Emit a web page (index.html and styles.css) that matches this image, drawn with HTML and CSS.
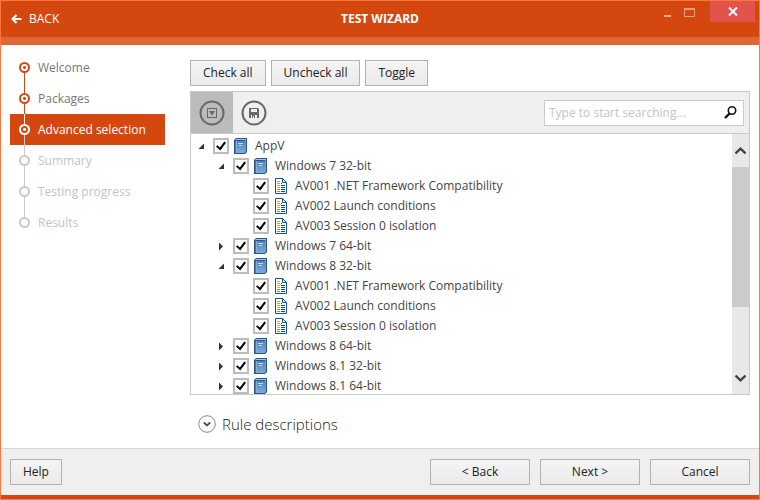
FILE: index.html
```html
<!DOCTYPE html>
<html lang="en">
<head>
<meta charset="utf-8">
<meta name="viewport" content="width=device-width, initial-scale=1">
<title>Test Wizard</title>
<link rel="stylesheet" href="styles.css">
</head>
<body>
<svg class="sprite" aria-hidden="true">
  <defs>
    <linearGradient id="cover" x1="0" y1="0" x2="0" y2="1">
      <stop offset="0" stop-color="#4f83ba"/>
      <stop offset="1" stop-color="#7dabd8"/>
    </linearGradient>
  </defs>
  <symbol id="book" viewBox="0 0 14 16">
    <path d="M3 0H14V14L12 16H1V2Z" fill="#27568c"/>
    <path d="M3 1H13V2H2Z" fill="#a9c6e2"/>
    <rect x="2" y="3" width="2" height="12" fill="#4679b0"/>
    <rect x="4" y="3" width="8" height="12" fill="url(#cover)"/>
    <path d="M3.500 3V15" stroke="#86b0d8"/>
    <path d="M12.500 2V14" stroke="#6d97c2"/>
    <path d="M5 5.500H10M6 7.500H9" stroke="#c4daee"/>
  </symbol>
  <symbol id="rule" viewBox="0 0 14 16">
    <path d="M2.500 0.500H9.500L13.500 4.500V15.500H2.500Z" fill="#fff" stroke="#0f578c"/>
    <path d="M9.500 0.500V4.500H13.500Z" fill="#d8e8f2" stroke="#0f578c"/>
    <path d="M4 3.500H7M4 5.500H7" stroke="#f59a1c"/>
    <path d="M4 7.500H7M4 9.500H7" stroke="#ecae12"/>
    <path d="M4 11.500H7M4 13.500H7" stroke="#5eae3c"/>
    <path d="M8 5.500H9M8 7.500H12M8 9.500H12M8 11.500H12M8 13.500H12" stroke="#174c78"/>
  </symbol>
  <symbol id="open" viewBox="0 0 7 7"><path d="M6 0.500V6H0.500Z" fill="#333"/></symbol>
  <symbol id="closed" viewBox="0 0 7 9"><path d="M1 0.500L5 4.500L1 8.500Z" fill="#333"/></symbol>
</svg>

<header class="titlebar">
  <button class="back" type="button">
    <svg width="11" height="10" viewBox="0 0 11 10" fill="none" stroke="#fff" stroke-width="2"><path d="M5.500 1L1.500 5L5.500 9M1.500 5H10.500"/></svg>
    BACK
  </button>
  <h1 class="title">TEST WIZARD</h1>
  <div class="caption">
    <button class="caption-button minimize" type="button" aria-label="Minimize"><svg width="7" height="2"><rect width="7" height="2" fill="#eeab90"/></svg></button>
    <button class="caption-button maximize" type="button" aria-label="Maximize"><svg width="11" height="9" fill="none" stroke="#eb9f7c"><path d="M0 1H11" stroke-width="2"/><path d="M0.500 1V8.500H10.500V1"/></svg></button>
    <button class="caption-button close" type="button" aria-label="Close"><svg width="10" height="9" viewBox="0 0 10 9" stroke="#fff" stroke-width="2"><path d="M1 0.500L9 8.500M9 0.500L1 8.500"/></svg></button>
  </div>
</header>

<div class="workspace">
  <nav aria-label="Steps">
    <ol class="steps">
      <li class="step done">Welcome</li>
      <li class="step done">Packages</li>
      <li class="step current" aria-current="step">Advanced selection</li>
      <li class="step">Summary</li>
      <li class="step">Testing progress</li>
      <li class="step">Results</li>
    </ol>
  </nav>

  <main class="content">
    <div class="actions">
      <button class="button" type="button">Check all</button>
      <button class="button" type="button">Uncheck all</button>
      <button class="button" type="button">Toggle</button>
    </div>

    <section class="panel">
      <div class="toolbar">
        <button class="tool active" type="button" aria-label="Filter">
          <svg width="26" height="26" viewBox="0 0 26 26" fill="none" stroke="#686868"><circle cx="13" cy="13" r="11.500" stroke-width="2"/><rect x="8.500" y="8.500" width="9" height="9"/><path d="M10 11H16L13 15.500Z" fill="#686868" stroke="none"/></svg>
        </button>
        <button class="tool" type="button" aria-label="Save">
          <svg width="26" height="26" viewBox="0 0 26 26"><circle cx="13" cy="13" r="11.500" fill="none" stroke="#686868" stroke-width="2"/><path d="M8 8H17L18 9V18H8Z" fill="#686868"/><path d="M10 9H16V12H10ZM10 15H16V18H10Z" fill="#efefef"/><path d="M11 15H14V18H13V16H12V18H11Z" fill="#686868"/></svg>
        </button>
        <div class="search">
          <input class="search-input" type="text" aria-label="Search" placeholder="Type to start searching...">
          <svg width="13" height="13" viewBox="0 0 13 13" fill="none" stroke="#111"><circle cx="8" cy="4.500" r="3.700" stroke-width="1.600"/><path d="M5.500 7.500L1 12" stroke-width="2.400"/></svg>
        </div>
      </div>

      <div class="viewport">
        <ul class="tree">
          <li>
            <div class="node"><button class="twisty" type="button" aria-label="Collapse"><svg width="7" height="7"><use href="#open"/></svg></button><input class="check" type="checkbox" id="appv" checked><label class="name" for="appv"><svg width="14" height="16"><use href="#book"/></svg>AppV</label></div>
            <ul class="branch">
              <li>
                <div class="node"><button class="twisty" type="button" aria-label="Collapse"><svg width="7" height="7"><use href="#open"/></svg></button><input class="check" type="checkbox" id="w7-32" checked><label class="name" for="w7-32"><svg width="14" height="16"><use href="#book"/></svg>Windows 7 32-bit</label></div>
                <ul class="branch">
                  <li class="node leaf"><input class="check" type="checkbox" id="w7-1" checked><label class="name" for="w7-1"><svg width="14" height="16"><use href="#rule"/></svg>AV001 .NET Framework Compatibility</label></li>
                  <li class="node leaf"><input class="check" type="checkbox" id="w7-2" checked><label class="name" for="w7-2"><svg width="14" height="16"><use href="#rule"/></svg>AV002 Launch conditions</label></li>
                  <li class="node leaf"><input class="check" type="checkbox" id="w7-3" checked><label class="name" for="w7-3"><svg width="14" height="16"><use href="#rule"/></svg>AV003 Session 0 isolation</label></li>
                </ul>
              </li>
              <li class="node"><button class="twisty" type="button" aria-label="Expand"><svg width="7" height="9"><use href="#closed"/></svg></button><input class="check" type="checkbox" id="w7-64" checked><label class="name" for="w7-64"><svg width="14" height="16"><use href="#book"/></svg>Windows 7 64-bit</label></li>
              <li>
                <div class="node"><button class="twisty" type="button" aria-label="Collapse"><svg width="7" height="7"><use href="#open"/></svg></button><input class="check" type="checkbox" id="w8-32" checked><label class="name" for="w8-32"><svg width="14" height="16"><use href="#book"/></svg>Windows 8 32-bit</label></div>
                <ul class="branch">
                  <li class="node leaf"><input class="check" type="checkbox" id="w8-1" checked><label class="name" for="w8-1"><svg width="14" height="16"><use href="#rule"/></svg>AV001 .NET Framework Compatibility</label></li>
                  <li class="node leaf"><input class="check" type="checkbox" id="w8-2" checked><label class="name" for="w8-2"><svg width="14" height="16"><use href="#rule"/></svg>AV002 Launch conditions</label></li>
                  <li class="node leaf"><input class="check" type="checkbox" id="w8-3" checked><label class="name" for="w8-3"><svg width="14" height="16"><use href="#rule"/></svg>AV003 Session 0 isolation</label></li>
                </ul>
              </li>
              <li class="node"><button class="twisty" type="button" aria-label="Expand"><svg width="7" height="9"><use href="#closed"/></svg></button><input class="check" type="checkbox" id="w8-64" checked><label class="name" for="w8-64"><svg width="14" height="16"><use href="#book"/></svg>Windows 8 64-bit</label></li>
              <li class="node"><button class="twisty" type="button" aria-label="Expand"><svg width="7" height="9"><use href="#closed"/></svg></button><input class="check" type="checkbox" id="w81-32" checked><label class="name" for="w81-32"><svg width="14" height="16"><use href="#book"/></svg>Windows 8.1 32-bit</label></li>
              <li class="node"><button class="twisty" type="button" aria-label="Expand"><svg width="7" height="9"><use href="#closed"/></svg></button><input class="check" type="checkbox" id="w81-64" checked><label class="name" for="w81-64"><svg width="14" height="16"><use href="#book"/></svg>Windows 8.1 64-bit</label></li>
            </ul>
          </li>
        </ul>
        <div class="scrollbar">
          <button class="scroll-arrow" type="button" aria-label="Scroll up"><svg width="11" height="8" viewBox="0 0 11 8" fill="none" stroke="#444" stroke-width="2.400"><path d="M0.500 6.500L5.500 1.700L10.500 6.500"/></svg></button>
          <div class="track"><div class="thumb"></div></div>
          <button class="scroll-arrow" type="button" aria-label="Scroll down"><svg width="11" height="8" viewBox="0 0 11 8" fill="none" stroke="#444" stroke-width="2.400"><path d="M0.500 1.500L5.500 6.300L10.500 1.500"/></svg></button>
        </div>
      </div>
    </section>

    <button class="expander" type="button">
      <svg width="18" height="18" viewBox="0 0 18 18" fill="none"><circle cx="9" cy="9" r="8.300" stroke="#888"/><path d="M5.800 7.500L9 10.500L12.200 7.500" stroke="#555" stroke-width="2"/></svg>
      Rule descriptions
    </button>
  </main>
</div>

<footer class="footer">
  <button class="button help" type="button">Help</button>
  <button class="button wide" type="button">&lt; Back</button>
  <button class="button wide" type="button">Next &gt;</button>
  <button class="button wide" type="button">Cancel</button>
</footer>
</body>
</html>
```
FILE: styles.css
```css
*, *::before, *::after { box-sizing: border-box; }

:root {
  --accent: #d4480f;
  --line: #c9c9c9;
  --surface: #efefef;
}

body {
  margin: 0;
  height: 100vh;
  display: flex;
  flex-direction: column;
  border: 1px solid #ff7540;
  background: #fff;
  color: #444;
  font: 12px/20px "Open Sans", "Noto Sans", sans-serif;
}

button, input {
  margin: 0;
  padding: 0;
  border: 0;
  background: none;
  color: inherit;
  font: inherit;
}

svg { display: block; flex: none; }
ul, ol { margin: 0; padding: 0; list-style: none; }
.sprite { position: absolute; width: 0; height: 0; }

.titlebar {
  flex: none;
  display: grid;
  grid-template-columns: 1fr auto 1fr;
  height: 44px;
  border-bottom: 8px solid #df6735;
  background: var(--accent);
  color: #fff;
}

.back {
  display: flex;
  align-items: center;
  justify-self: start;
  gap: 7px;
  padding-left: 10px;
}

.title {
  margin: 0;
  align-self: center;
  font-size: 12px;
  line-height: 20px;
  font-weight: 700;
}

.caption {
  display: flex;
  justify-content: flex-end;
  align-items: flex-start;
  padding-right: 4px;
}

.caption-button {
  display: flex;
  justify-content: center;
  height: 21px;
}

.minimize { width: 13px; padding-top: 14px; }
.maximize { width: 31px; margin-right: 5px; padding-top: 7px; }

.close {
  align-items: center;
  width: 45px;
  background: #e2534b;
}

.workspace {
  flex: 1;
  min-height: 0;
  display: flex;
  gap: 25px;
  padding: 0 9px;
}

.steps { width: 155px; padding-top: 7px; }

.step {
  --ring: #c8c8c8;
  --before: #c8c8c8;
  --after: #c8c8c8;
  --dot: transparent;
  position: relative;
  height: 31px;
  padding-left: 28px;
  color: #c3c3c3;
  line-height: 31px;
}

.step::before {
  content: "";
  position: absolute;
  left: 14px;
  top: 0;
  width: 1px;
  height: 31px;
  background: linear-gradient(var(--before) 0 10px, transparent 10px 21px, var(--after) 21px);
}

.step:first-child::before { --before: transparent; }
.step:last-child::before { --after: transparent; }

.step::after {
  content: "";
  position: absolute;
  left: 9px;
  top: 10px;
  width: 11px;
  height: 11px;
  border: 2px solid var(--ring);
  border-radius: 50%;
  background: radial-gradient(circle, var(--dot) 1px, transparent 2px);
}

.done {
  --ring: var(--accent);
  --before: var(--accent);
  --after: var(--accent);
  --dot: var(--accent);
  color: #777;
}

.current {
  --ring: #fff;
  --before: #fff;
  --dot: #fff;
  background: var(--accent);
  color: #fff;
}

.content {
  flex: 1;
  min-width: 0;
  display: flex;
  flex-direction: column;
  padding-top: 15px;
}

.actions { display: flex; gap: 5px; }

.button {
  flex: none;
  height: 26px;
  padding: 0 12px;
  border: 1px solid #b2b2b2;
  background: linear-gradient(#f4f4f4, #eaeaea);
  color: #222;
}

.panel {
  flex: 1;
  min-height: 0;
  display: flex;
  flex-direction: column;
  margin-top: 5px;
  border: 1px solid var(--line);
}

.toolbar {
  flex: none;
  display: flex;
  align-items: center;
  height: 42px;
  padding-right: 5px;
  border-bottom: 1px solid var(--line);
  background: var(--surface);
}

.tool {
  display: grid;
  place-items: center;
  width: 42px;
  height: 41px;
}

.tool.active { background: #bbb; }

.search {
  display: flex;
  align-items: center;
  width: 200px;
  height: 26px;
  margin-left: auto;
  padding: 0 6px 0 4px;
  border: 1px solid var(--line);
  background: #fff;
}

.search-input { flex: 1; min-width: 0; outline: 0; }
.search-input::placeholder { color: #c3c3c3; opacity: 1; }

.viewport { flex: 1; min-height: 0; display: flex; }

.tree {
  flex: 1;
  overflow: hidden;
  padding: 2px 0 0 7px;
}

.branch { padding-left: 20px; }
.node { display: flex; align-items: center; height: 20px; }
.leaf { padding-left: 15px; }
.twisty { width: 15px; }

.check {
  appearance: none;
  display: grid;
  place-items: center;
  width: 16px;
  height: 16px;
  border: 2px solid #bcbcbc;
  background: #fff;
}

.check:checked::before {
  content: "";
  width: 10px;
  height: 10px;
  background: #000;
  clip-path: polygon(0 54%, 14% 42%, 38% 64%, 84% 6%, 100% 18%, 42% 96%);
}

.name {
  display: flex;
  align-items: center;
  gap: 8px;
  padding-left: 4px;
  line-height: 18px;
  white-space: nowrap;
}

.scrollbar {
  display: flex;
  flex-direction: column;
  width: 17px;
  background: #e8e8e8;
}

.scroll-arrow { display: grid; place-items: center; height: 33px; }
.track { flex: 1; }
.thumb { height: 72%; background: #ccc; }

.expander {
  display: flex;
  align-items: center;
  align-self: flex-start;
  gap: 6px;
  height: 53px;
  padding: 4px 0 0 8px;
  color: #222;
  font-size: 15px;
  font-weight: 300;
}

.footer {
  flex: none;
  display: flex;
  gap: 10px;
  padding: 10px 9px;
  border-top: 1px solid #d6d6d6;
  border-bottom: 4px solid var(--accent);
  background: var(--surface);
}

.help { margin-right: auto; }
.wide { width: 100px; }
```
